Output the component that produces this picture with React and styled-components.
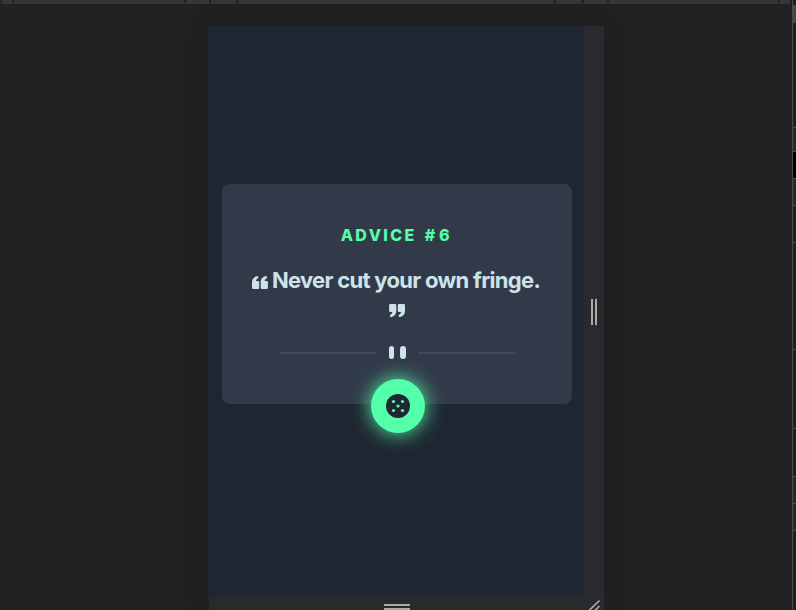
import React from 'react';
import styled, { createGlobalStyle } from 'styled-components';

const GlobalStyle = createGlobalStyle`
  * { box-sizing: border-box; }
  html, body { margin: 0; overflow: hidden; background: #212122; }
`;

const Page = styled.div`
  display: grid;
  grid-template-columns: 792px 4px;
  height: 610px;
  overflow: hidden;
  background: #212122;
`;

const Workspace = styled.main`
  display: flex;
  flex-direction: column;
  min-width: 0;
`;

const Ruler = styled.div`
  display: flex;
  flex: 0 0 4px;
  width: 790px;
  border-left: 2px solid #242527;
  border-bottom: 1px solid #35363a;
`;

const Segment = styled.div`
  width: ${({ $w }) => $w}px;
  background: #35363a;
  border-right: ${({ $last }) => ($last ? 'none' : '2px solid #212122')};
`;

const Device = styled.section`
  display: grid;
  grid-template-columns: 376px 20px;
  grid-template-rows: 570px 14px;
  width: 396px;
  margin: 22px 0 0 208px;
  background: #292a2d;
  box-shadow: 0 0 20px rgba(30, 30, 30, 0.35);
`;

const Screen = styled.div`
  display: flex;
  flex-direction: column;
  padding: 158px 12px 0 14px;
  background: #1f2632;
`;

const Card = styled.article`
  display: flex;
  flex-direction: column;
  align-items: center;
  height: 220px;
  padding-top: 41px;
  border-radius: 8px;
  background: #323a49;
  font-family: Inter, sans-serif;
`;

const Heading = styled.h1`
  margin: 0;
  font-size: 16px;
  line-height: 20px;
  font-weight: 800;
  letter-spacing: 2.4px;
  word-spacing: 2px;
  color: #53ffaa;
  white-space: nowrap;
`;

const AdviceNumber = styled.span`
  letter-spacing: 3.8px;
`;

const Quote = styled.p`
  display: flex;
  align-items: center;
  gap: 4px;
  height: 30px;
  margin: 20px 2px 0 0;
  color: #cee3e9;
  font-size: 22px;
  line-height: 30px;
  font-weight: 700;
  letter-spacing: -0.7px;
  white-space: nowrap;
`;

const Mark = styled.svg`
  display: block;
  width: 16px;
  height: 13px;
  margin-top: ${({ $top }) => $top}px;
  fill: #cee3e9;
`;

const ClosingRow = styled.div`
  display: flex;
  height: 13px;
  margin-top: 9px;
`;

const Divider = styled.div`
  display: flex;
  align-items: center;
  gap: 12px;
  width: 236px;
  height: 13px;
  margin: 29px 0 0;
`;

const Rule = styled.span`
  flex: 1;
  height: 2px;
  background: #3e4857;
`;

const Bars = styled.span`
  display: flex;
  justify-content: space-between;
  width: 17px;
  height: 13px;
`;

const Bar = styled.span`
  width: 5.5px;
  border-radius: 3px;
  background: #cee3e9;
`;

const DiceButton = styled.button`
  display: grid;
  flex: none;
  place-items: center;
  width: 54px;
  height: 54px;
  margin: 20px 0 0 2px;
  padding: 0;
  border: 0;
  border-radius: 50%;
  background: #53ffaa;
  box-shadow: 0 0 20px #53ffaa;
`;

const SideHandle = styled.div`
  display: flex;
  gap: 2px;
  align-self: start;
  margin: 273px 0 0 7px;
`;

const BottomBar = styled.div`
  display: flex;
  flex-direction: column;
  gap: 2px;
  padding: 8px 0 0 175px;
  border-left: 1px solid #212122;
`;

const Grip = styled.span`
  width: ${({ $w }) => $w}px;
  height: ${({ $h }) => $h}px;
  background: #aaaaab;
`;

const Corner = styled.svg`
  display: block;
  width: 20px;
  height: 14px;
`;

const Sidebar = styled.aside`
  border-left: 1px solid #4a4c50;
  background: #1f1f22;
`;

const SideRow = styled.div`
  height: ${({ $h }) => $h}px;
  background: ${({ $bg }) => $bg || '#1f1f22'};
  border-bottom: ${({ $line }) => ($line ? '1px solid #4a4c50' : 'none')};
`;

const segments = [12, 172, 25, 27, 318, 28, 25, 171, 10];
const rows = [
  [5], [18, '#474747'], [105, null, true], [24, '#29292d', true],
  [27, '#000', true], [27, '#29292d', true], [37, null, true],
  [107, null, true], [79, null, true], [48, null, true],
  [27, '#29292d', true], [27, '#29292d', true], [79],
];

function QuoteMark({ closing }) {
  return (
    <Mark viewBox="0 0 16 13" $top={closing ? 0 : 4} aria-hidden="true">
      <g transform={closing ? 'rotate(180 8 6.5)' : undefined}>
        <path d="M6.2 0v2.2C4.8 2.6 4.1 3.6 4 5h2q1.2 0 1.2 1.2v5.6Q7.2 13 6 13H1.2Q0 13 0 11.8V6.6C0 2.7 2.2.3 6.2 0Z" />
        <path d="M14.9 0v2.2c-1.4.4-2.1 1.4-2.2 2.8h2q1.2 0 1.2 1.2v5.6q0 1.2-1.2 1.2H9.9q-1.2 0-1.2-1.2V6.6C8.7 2.7 10.9.3 14.9 0Z" />
      </g>
    </Mark>
  );
}

export default function App() {
  return (
    <Page>
      <GlobalStyle />
      <Workspace>
        <Ruler>
          {segments.map((w, i) => (
            <Segment key={i} $w={w} $last={i === segments.length - 1} />
          ))}
        </Ruler>
        <Device>
          <Screen>
            <Card>
              <Heading>ADVICE <AdviceNumber>#6</AdviceNumber></Heading>
              <Quote><QuoteMark />Never cut your own fringe.</Quote>
              <ClosingRow><QuoteMark closing /></ClosingRow>
              <Divider>
                <Rule />
                <Bars><Bar /><Bar /></Bars>
                <Rule />
              </Divider>
              <DiceButton aria-label="New advice">
                <svg width="24" height="24" viewBox="0 0 24 24">
                  <circle cx="12" cy="12" r="12" fill="#202733" />
                  <g fill="#53ffaa">
                    <circle cx="7.5" cy="7.5" r="1.6" />
                    <circle cx="16.5" cy="7.5" r="1.6" />
                    <circle cx="12" cy="12" r="1.6" />
                    <circle cx="7.5" cy="16.5" r="1.6" />
                    <circle cx="16.5" cy="16.5" r="1.6" />
                  </g>
                </svg>
              </DiceButton>
            </Card>
          </Screen>
          <SideHandle><Grip $w={2} $h={26} /><Grip $w={2} $h={26} /></SideHandle>
          <BottomBar><Grip $w={26} $h={2} /><Grip $w={26} $h={2} /></BottomBar>
          <Corner viewBox="0 0 20 14">
            <path d="M4 15.5 15.5 4.5M10 15.5l5.5-5.5" stroke="#aaaaab" strokeWidth="1.7" />
          </Corner>
        </Device>
      </Workspace>
      <Sidebar>
        {rows.map(([h, bg, line], i) => <SideRow key={i} $h={h} $bg={bg} $line={line} />)}
      </Sidebar>
    </Page>
  );
}
